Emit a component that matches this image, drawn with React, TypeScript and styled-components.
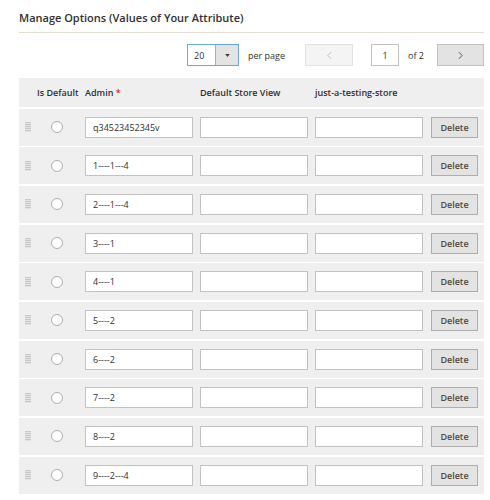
import styled, { createGlobalStyle } from "styled-components";

const GlobalStyle = createGlobalStyle`
  body {
    margin: 0;
    background: #fff;
    font-family: "Open Sans", "Liberation Sans", sans-serif;
    color: #303030;
  }
`;

const options = [
  "q34523452345v",
  "1----1---4",
  "2----1---4",
  "3----1",
  "4----1",
  "5----2",
  "6----2",
  "7----2",
  "8----2",
  "9----2---4",
];

export default function App() {
  return (
    <>
      <GlobalStyle />
      <Page>
        <Title>Manage Options (Values of Your Attribute)</Title>

        <Toolbar>
          <PerPageSelect>
            <span>20</span>
            <SelectArrow>
              <svg width="5" height="3" viewBox="0 0 6 4">
                <path d="M0 0h6L3 4z" fill="#41362f" />
              </svg>
            </SelectArrow>
          </PerPageSelect>
          <ToolbarLabel>per page</ToolbarLabel>
          <PagerButton $disabled>
            <svg width="5" height="9" viewBox="0 0 6 10">
              <path d="M5 1L1 5l4 4" fill="none" stroke="#b5b5b5" strokeWidth="1" />
            </svg>
          </PagerButton>
          <PageInput>1</PageInput>
          <PageTotal>of 2</PageTotal>
          <PagerButton>
            <svg width="5" height="9" viewBox="0 0 6 10">
              <path d="M1 1l4 4-4 4" fill="none" stroke="#41362f" strokeWidth="1" />
            </svg>
          </PagerButton>
        </Toolbar>

        <Grid>
          <HeaderRow>
            <span />
            <HeadCell>Is Default</HeadCell>
            <HeadCell>
              Admin <Required>*</Required>
            </HeadCell>
            <HeadCell>Default Store View</HeadCell>
            <HeadCell>just-a-testing-store</HeadCell>
            <span />
          </HeaderRow>
          {options.map((value) => (
            <Row key={value}>
              <Handle />
              <Radio />
              <TextField>{value}</TextField>
              <TextField />
              <TextField />
              <DeleteButton>Delete</DeleteButton>
            </Row>
          ))}
        </Grid>
      </Page>
    </>
  );
}

const Page = styled.div`
  padding: 9px 6px 0 19px;
`;

const Title = styled.h2`
  margin: 0;
  font-size: 11px;
  font-weight: 600;
  line-height: 18px;
  color: #303030;
  padding-bottom: 5px;
  border-bottom: 1px solid #e3ddd3;
`;

const Toolbar = styled.div`
  display: flex;
  align-items: center;
  justify-content: flex-end;
  margin-top: 11px;
  height: 22px;
  font-size: 9px;
  color: #303030;
`;

const PerPageSelect = styled.div`
  box-sizing: border-box;
  width: 52px;
  height: 22px;
  display: flex;
  align-items: stretch;
  border: 1px solid #68a8e0;
  background: #fff;
  span {
    flex: 1;
    display: flex;
    align-items: center;
    padding-left: 6px;
  }
`;

const SelectArrow = styled.div`
  width: 22px;
  display: flex;
  align-items: center;
  justify-content: center;
  background: #e3e3e3;
  border-left: 1px solid #adadad;
`;

const ToolbarLabel = styled.span`
  margin-left: 9px;
  margin-right: 20px;
`;

const PagerButton = styled.div<{ $disabled?: boolean }>`
  box-sizing: border-box;
  width: ${(p) => (p.$disabled ? "48px" : "47px")};
  height: 22px;
  display: flex;
  align-items: center;
  justify-content: center;
  background: ${(p) => (p.$disabled ? "#f4f4f4" : "#e3e3e3")};
  border: 1px solid ${(p) => (p.$disabled ? "#e3e3e3" : "#c2c2c2")};
`;

const PageInput = styled.div`
  box-sizing: border-box;
  width: 28px;
  height: 22px;
  margin-left: 18px;
  display: flex;
  align-items: center;
  justify-content: center;
  border: 1px solid #c2c2c2;
  background: #fff;
`;

const PageTotal = styled.span`
  margin-left: 9px;
  margin-right: 13px;
`;

const Grid = styled.div`
  margin-top: 12px;
  display: flex;
  flex-direction: column;
  gap: 1.67px;
`;

const cols = `
  display: grid;
  grid-template-columns: 18px 48px 115px 115px 116px 47px;
  padding-right: 6px;
  background: #efefef;
  align-items: center;
`;

const HeaderRow = styled.div`
  ${cols};
  height: 29px;
`;

const HeadCell = styled.span`
  font-size: 9px;
  font-weight: 600;
  color: #303030;
  white-space: nowrap;
`;

const Required = styled.span`
  color: #e22626;
`;

const Row = styled.div`
  ${cols};
  height: 37px;
`;

const Handle = styled.span`
  width: 6px;
  height: 10px;
  margin-left: 6px;
  background: repeating-linear-gradient(
    to bottom,
    #c9c9c9 0 1px,
    #e2e2e2 1px 2px
  );
`;

const Radio = styled.span`
  box-sizing: border-box;
  width: 12px;
  height: 12px;
  margin-left: 14px;
  border-radius: 50%;
  border: 1px solid #adadad;
  background: #fff;
`;

const TextField = styled.div`
  box-sizing: border-box;
  width: 108px;
  height: 21px;
  padding-left: 7px;
  display: flex;
  align-items: center;
  font-size: 9px;
  color: #303030;
  background: #fff;
  border: 1px solid #c2c2c2;
`;

const DeleteButton = styled.div`
  box-sizing: border-box;
  width: 47px;
  height: 21px;
  display: flex;
  align-items: center;
  justify-content: center;
  font-size: 9px;
  font-weight: 600;
  color: #514943;
  background: #e3e3e3;
  border: 1px solid #adadad;
`;
